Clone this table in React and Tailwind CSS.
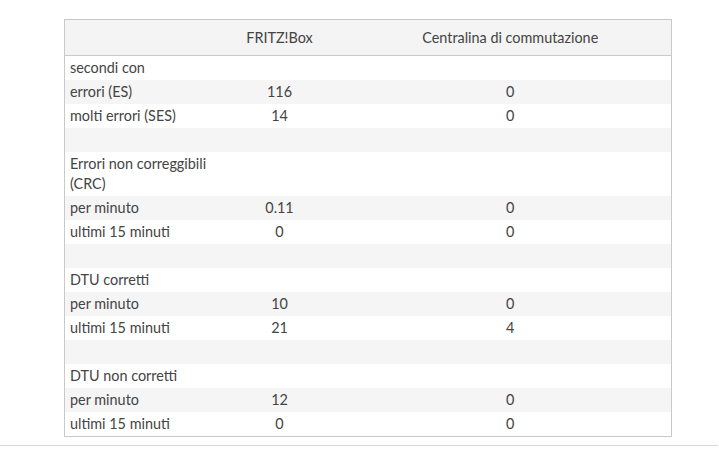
export default function App() {
  const rows = [
    { l: "secondi con", a: "", b: "" },
    { l: "errori (ES)", a: "116", b: "0" },
    { l: "molti errori (SES)", a: "14", b: "0" },
    { l: "", a: "", b: "" },
    { l: "Errori non correggibili", l2: "(CRC)", a: "", b: "" },
    { l: "per minuto", a: "0.11", b: "0" },
    { l: "ultimi 15 minuti", a: "0", b: "0" },
    { l: "", a: "", b: "" },
    { l: "DTU corretti", a: "", b: "" },
    { l: "per minuto", a: "10", b: "0" },
    { l: "ultimi 15 minuti", a: "21", b: "4" },
    { l: "", a: "", b: "" },
    { l: "DTU non corretti", a: "", b: "" },
    { l: "per minuto", a: "12", b: "0" },
    { l: "ultimi 15 minuti", a: "0", b: "0" },
  ];
  return (
    <div className="w-[719px] h-[460px] bg-white text-[#444444] font-['Lato','Open_Sans',sans-serif] text-[14.4px]">
      <div className="pt-[19px] pl-[64px]">
        <table className="w-[607px] table-fixed border-collapse border border-[#c9c9c9]">
          <colgroup>
            <col className="w-[145px]" />
            <col className="w-[140px]" />
            <col className="w-[322px]" />
          </colgroup>
          <thead>
            <tr className="bg-[#f4f4f4] h-[36px] border-b border-[#c9c9c9]">
              <th className="font-normal"></th>
              <th className="font-normal text-center">FRITZ!Box</th>
              <th className="font-normal text-center">Centralina di commutazione</th>
            </tr>
          </thead>
          <tbody>
            {rows.map((r, i) => (
              <tr key={i} className={i % 2 === 1 ? "bg-[#f5f5f5]" : "bg-white"}>
                <td className="pl-[5px] py-[2px] leading-[20px] align-top whitespace-nowrap">
                  {r.l || "\u00a0"}
                  {r.l2 && (
                    <>
                      <br />
                      {r.l2}
                    </>
                  )}
                </td>
                <td className="py-[2px] leading-[20px] text-center">{r.a || "\u00a0"}</td>
                <td className="py-[2px] leading-[20px] text-center">{r.b || "\u00a0"}</td>
              </tr>
            ))}
          </tbody>
        </table>
      </div>
      <div className="mt-[8px] h-px bg-[#d9d9d9] w-[718px]"></div>
    </div>
  );
}
